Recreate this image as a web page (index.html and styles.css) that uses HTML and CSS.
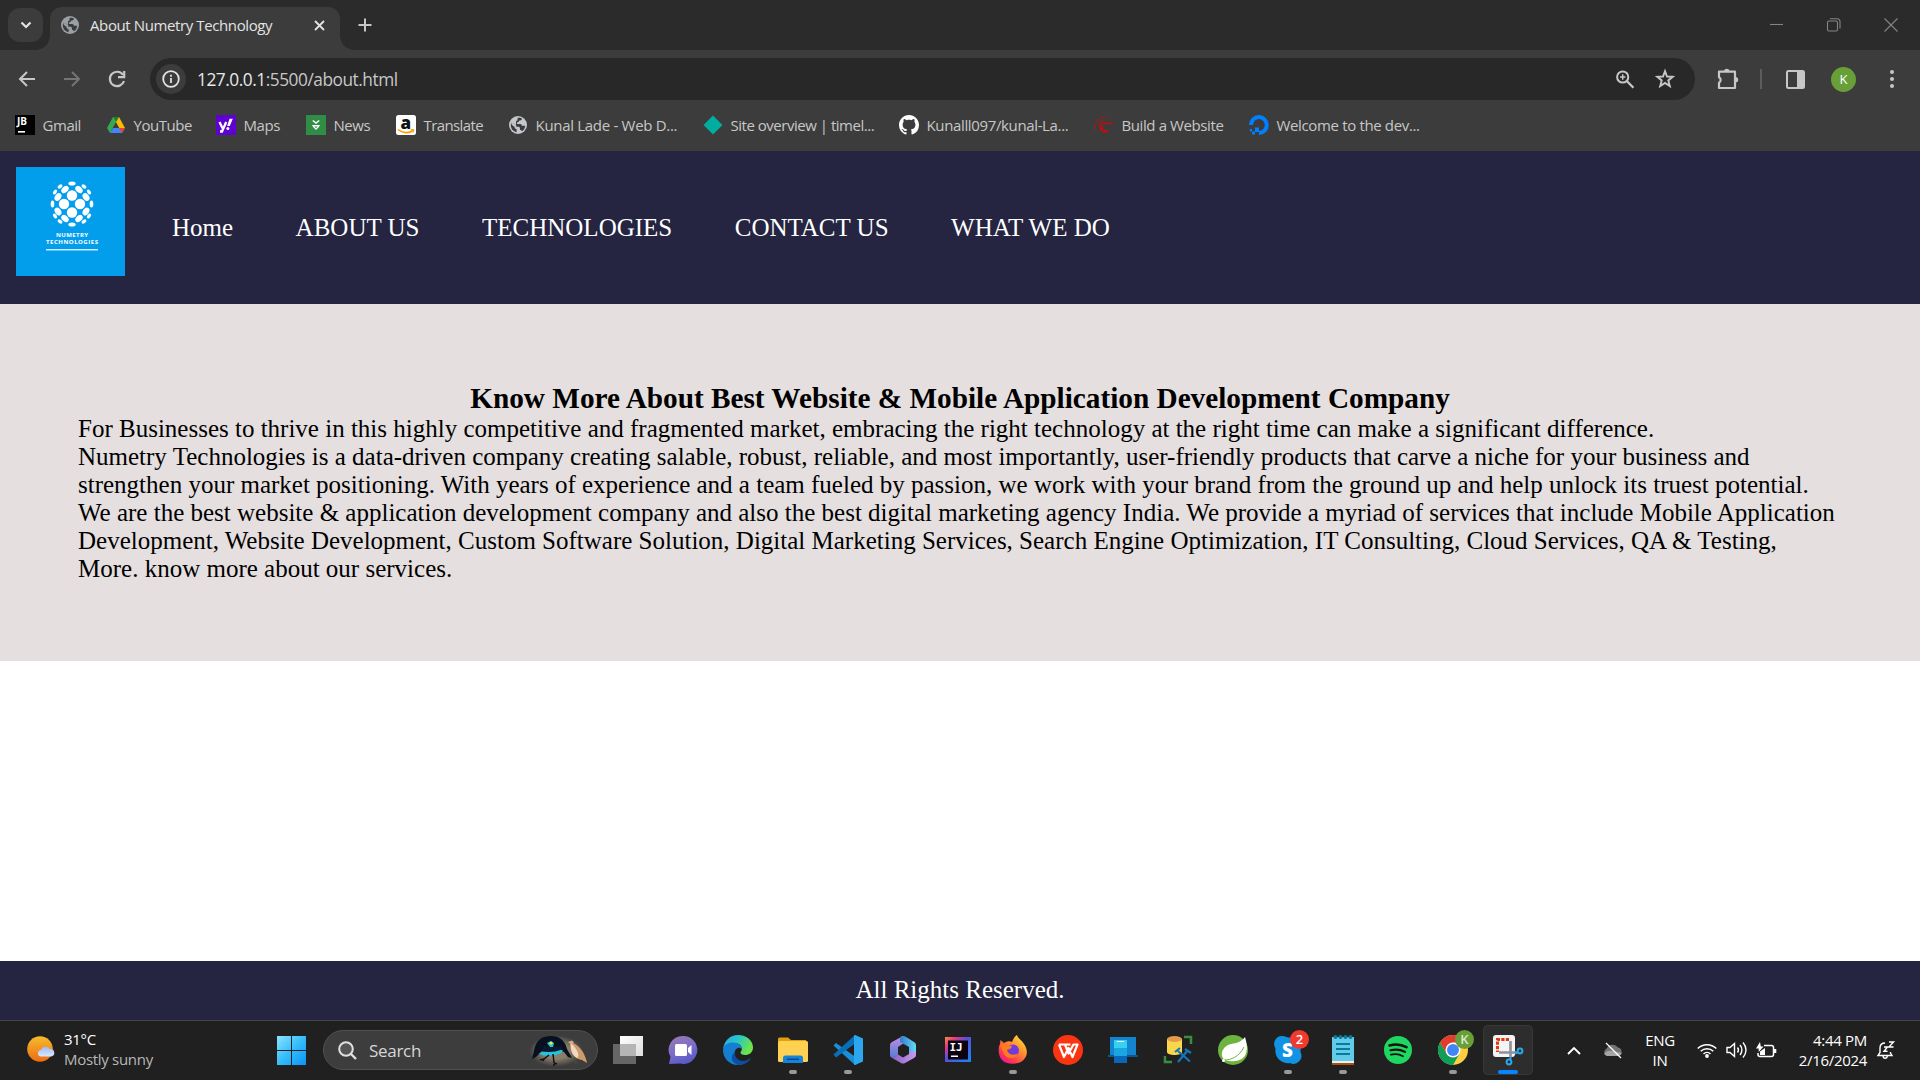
FILE: index.html
```html
<!DOCTYPE html>
<html lang="en">
<head>
<meta charset="utf-8">
<title>About Numetry Technology</title>
<link rel="stylesheet" href="styles.css">
</head>
<body>
<svg class="defs" width="0" height="0" aria-hidden="true">
  <defs>
    <symbol id="globe" viewBox="0 0 18 18"><circle cx="9" cy="9" r="9"/><path class="cut" d="M8.6 1.8C11 1.6 12 2 13 2.7 12.600 4.200 11.500 4.600 10 4.700 9.800 6 9.400 6.300 8 6.400V8h3.300c1 0 1.500.8 1.500 1.700h3.400c-.1 2.200-1.200 4.300-3.200 5.500-.4-.8-.9-1.200-2-1.200v-1.600c0-1.200-.8-1.700-1.700-1.700H7.200V9.100L2 6.500C2.500 8.500 3.500 10 5.400 10.400c.1 1.600.9 2.500 2.200 2.600v3.200C4 15.600 1.800 12.600 1.800 9c0-1 .2-1.800.5-2.600L7 8.800V6.300c0-1.100.5-1.700 1.500-1.700z"/></symbol>
  </defs>
</svg>

<header class="browser">
  <div class="tabstrip">
    <button class="tab-search"><svg width="12" height="8" viewBox="0 0 12 8"><path d="M1.500 1.500 6 6l4.500-4.500" fill="none" stroke="#e3e3e3" stroke-width="2.200"/></svg></button>
    <div class="tab">
      <svg class="globe dim" width="18" height="18"><use href="#globe"/></svg>
      <span class="tab-title">About Numetry Technology</span>
      <svg width="11" height="11" viewBox="0 0 11 11"><path d="M1 1l9 9M10 1l-9 9" stroke="#e3e3e3" stroke-width="1.800"/></svg>
    </div>
    <svg class="newtab" width="14" height="14" viewBox="0 0 14 14"><path d="M7 .5v13M.5 7h13" stroke="#c7c7c7" stroke-width="2"/></svg>
    <div class="window-controls">
      <svg width="14" height="14" viewBox="0 0 14 14"><path d="M0 6.500h13"/></svg>
      <svg width="14" height="14" viewBox="0 0 14 14"><rect x=".5" y="3" width="10" height="10" rx="1.500"/><path d="M3 .8h7.500a2.500 2.500 0 0 1 2.500 2.500v7.200"/></svg>
      <svg width="14" height="14" viewBox="0 0 14 14"><path d="M.5.5l13 13M13.500.5l-13 13"/></svg>
    </div>
  </div>

  <div class="toolbar">
    <div class="nav-buttons">
      <svg width="18" height="18" viewBox="0 0 18 18"><path d="M17 9H3M9 2 2 9l7 7" fill="none" stroke="#c7c7c7" stroke-width="2"/></svg>
      <svg width="18" height="18" viewBox="0 0 18 18"><path d="M1 9h14M9 2l7 7-7 7" fill="none" stroke="#757575" stroke-width="2"/></svg>
      <svg width="18" height="18" viewBox="0 0 18 18"><path d="M15 4.800A7.200 7.200 0 1 0 16 11" fill="none" stroke="#c7c7c7" stroke-width="2.200"/><path d="M16.200 1v6.200H10" fill="none" stroke="#c7c7c7" stroke-width="2.200"/></svg>
    </div>
    <div class="omnibox">
      <span class="site-info"><svg width="18" height="18" viewBox="0 0 18 18"><circle cx="9" cy="9" r="7.800" fill="none" stroke="#e3e3e3" stroke-width="1.800"/><path d="M8.100 8h1.800v5H8.100zM8.100 4.800h1.800v1.900H8.100z" fill="#e3e3e3"/></svg></span>
      <span class="url"><b>127.0.0.1</b>:5500/about.html</span>
      <svg class="zoom-icon" width="18" height="19" viewBox="0 0 18 19"><circle cx="6.700" cy="7" r="5.600" fill="none" stroke="#c7c7c7" stroke-width="2"/><path d="M11 11.300l6.400 6.500" stroke="#c7c7c7" stroke-width="2.300"/><path d="M6.700 4.300v5.400M4 7h5.400" stroke="#c7c7c7" stroke-width="1.500"/></svg>
      <svg width="20" height="20" viewBox="0 0 20 20"><path d="M10 2.200l2 5.300 5.700.3-4.400 3.600 1.500 5.600L10 13.900 5.200 17l1.500-5.600L2.300 7.800 8 7.500z" fill="none" stroke="#c7c7c7" stroke-width="1.900"/></svg>
    </div>
    <svg class="puzzle" width="22" height="22" viewBox="0 0 22 22"><path d="M2 3.600h16V20H2v-5.300a3.100 3.100 0 0 0 0-5.500z" fill="none" stroke="#c7c7c7" stroke-width="2.200" stroke-linejoin="round"/><path d="M7 3a2.800 2.800 0 0 1 5.500 0zM18.500 9a2.700 2.700 0 0 1 0 5.400z" fill="#c7c7c7"/></svg>
    <span class="divider"></span>
    <svg class="panel" width="19" height="19" viewBox="0 0 19 19"><rect x="1" y="1" width="17" height="17" rx="1.500" fill="none" stroke="#c7c7c7" stroke-width="2"/><path d="M11 1h7v17h-7z" fill="#c7c7c7"/></svg>
    <span class="avatar">K</span>
    <svg class="dots" width="4" height="18" viewBox="0 0 4 18"><circle cx="2" cy="2" r="2"/><circle cx="2" cy="9" r="2"/><circle cx="2" cy="16" r="2"/></svg>
  </div>

  <nav class="bookmarks">
    <a class="bm w-gmail"><svg width="20" height="20" viewBox="0 0 20 20"><path d="M0 0h20v20H0z"/><path d="M3 16h7v1.600H3z" fill="#fff"/><text x="2" y="9.700" class="jb">JB</text></svg>Gmail</a>
    <a class="bm w-youtube"><svg width="20" height="20" viewBox="0 0 20 20"><path d="M7 2h6l-3 5.300L4 18l-3-5z" fill="#34a853"/><path d="M13 2l6 11h-6L7 2z" fill="#fbbc04"/><path d="M7 2h6l-3 5.200z" fill="#188038"/><path d="M7 13h12l-3 5H4z" fill="#4285f4"/><path d="M13 13h6l-3 5z" fill="#ea4335"/><path d="M10 7.400 13.200 13H6.800z" fill="#3c3c3c"/></svg>YouTube</a>
    <a class="bm w-maps"><svg width="20" height="20" viewBox="0 0 20 20"><path d="M0 0h20v20H0z" fill="#5f01d1"/><path d="M3.500 7l3 6.300M10.200 7 6 16.500H4" fill="none" stroke="#fff" stroke-width="2.300"/><path d="M13.500 3.800h3.300L13.800 11h-2.600z" fill="#fff"/><circle cx="11.900" cy="13.400" r="1.500" fill="#fff"/></svg>Maps</a>
    <a class="bm w-news"><svg width="20" height="20" viewBox="0 0 20 20"><path d="M0 0h20v20H0z" fill="#2f8d46"/><path d="M6.800 5.500 10 8l3.200-2.500M6.800 10c.2 1.500 1.400 2.500 3.200 4 1.800-1.500 3-2.500 3.200-4M6.800 10.800h6.400" fill="none" stroke="#fff" stroke-width="1.500"/></svg>News</a>
    <a class="bm w-translate"><svg width="20" height="20" viewBox="0 0 20 20"><rect width="20" height="20" rx="2.500" fill="#fff"/><text x="4.600" y="13.500" class="amz">a</text><path d="M2 14.500c4.500 4 11 4 15 1" fill="none" stroke="#f90" stroke-width="1.600"/><path d="M14.500 14.600h3.300l-.8 3" fill="none" stroke="#f90" stroke-width="1"/></svg>Translate</a>
    <a class="bm w-kunal"><svg class="globe" width="20" height="20" viewBox="-1 -1 20 20"><use href="#globe" width="18" height="18"/></svg>Kunal Lade - Web D...</a>
    <a class="bm w-site"><svg width="20" height="20" viewBox="0 0 20 20"><path d="M10 .5 19.500 10 10 19.500.5 10z" fill="#00ad9f"/></svg>Site overview | timel...</a>
    <a class="bm w-github"><svg width="20" height="20" viewBox="0 0 16 16"><path fill="#fff" d="M8 0C3.580 0 0 3.580 0 8c0 3.540 2.290 6.530 5.470 7.590.4.070.55-.17.55-.38 0-.19-.01-.82-.01-1.490-2.010.37-2.530-.49-2.690-.94-.09-.23-.48-.94-.82-1.130-.28-.15-.68-.52-.01-.53.63-.01 1.080.58 1.230.82.72 1.210 1.870.87 2.330.66.070-.52.28-.87.51-1.070-1.780-.2-3.640-.89-3.640-3.950 0-.87.31-1.590.82-2.150-.08-.2-.36-1.020.08-2.120 0 0 .67-.21 2.200.82.64-.18 1.320-.27 2-.27s1.360.09 2 .27c1.530-1.040 2.200-.82 2.200-.82.44 1.100.16 1.920.08 2.120.51.56.82 1.270.82 2.150 0 3.070-1.870 3.750-3.650 3.950.29.25.54.73.54 1.480 0 1.070-.01 1.930-.01 2.200 0 .21.15.46.55.38A8.010 8.010 0 0 0 16 8c0-4.420-3.580-8-8-8z"/></svg>Kunalll097/kunal-La...</a>
    <a class="bm w-build"><svg width="20" height="20" viewBox="0 0 20 20"><g fill="none" stroke="#c90b0b"><path d="M1.500 15C0 10 2 6 6 4.500M6 3c2-1.200 4-1.200 6.500-.5M5 12c0-3 1-5 4-6.500" stroke-width=".9"/><path d="M19 7c-3 2.500-5 2.500-9 1M10 7c-3 2-3 5-1 7" stroke-width="1.500"/><path d="M6.500 12c1 4.500 4 5.500 7 3.500" stroke-width="2.200"/></g></svg>Build a Website</a>
    <a class="bm w-welcome"><svg width="20" height="20" viewBox="0 0 20 20"><path d="M10 17.900A7.900 7.900 0 1 0 2 10" fill="none" stroke="#0080ff" stroke-width="4"/><path d="M6 12.500h4V17H6zM3 16.500h3v3H3zM.8 14h2.200v2.500H.8z" fill="#0080ff"/></svg>Welcome to the dev...</a>
  </nav>
</header>

<main class="page">
  <div class="site-header">
    <svg class="logo" width="109" height="109" viewBox="0 0 109 109">
      <path d="M0 0h109v109H0z" fill="#029eec"/>
      <g fill="#fff">
        <circle cx="56" cy="28.500" r="5.200"/><circle cx="48" cy="37" r="5.200"/><circle cx="64" cy="37" r="5.200"/><circle cx="56" cy="45.500" r="5.200"/>
        <ellipse cx="56" cy="16.500" rx="3.600" ry="2"/><ellipse cx="56" cy="57.500" rx="3.600" ry="2"/><ellipse cx="36.500" cy="37" rx="1.800" ry="3.600"/><ellipse cx="75.500" cy="37" rx="1.800" ry="3.600"/>
        <ellipse cx="49" cy="22.500" rx="4.200" ry="3" transform="rotate(-45 49 22.500)"/><ellipse cx="63" cy="22.500" rx="4.200" ry="3" transform="rotate(45 63 22.500)"/>
        <ellipse cx="42" cy="30" rx="4.200" ry="3" transform="rotate(-55 42 30)"/><ellipse cx="70" cy="30" rx="4.200" ry="3" transform="rotate(55 70 30)"/>
        <ellipse cx="42" cy="44.500" rx="4.200" ry="3" transform="rotate(55 42 44.500)"/><ellipse cx="70" cy="44.500" rx="4.200" ry="3" transform="rotate(-55 70 44.500)"/>
        <ellipse cx="49" cy="51.500" rx="4.200" ry="3" transform="rotate(45 49 51.500)"/><ellipse cx="63" cy="51.500" rx="4.200" ry="3" transform="rotate(-45 63 51.500)"/>
        <ellipse cx="44" cy="19.500" rx="2.700" ry="1.700" transform="rotate(-35 44 19.500)"/><ellipse cx="68" cy="19.500" rx="2.700" ry="1.700" transform="rotate(35 68 19.500)"/>
        <ellipse cx="39" cy="25" rx="2.700" ry="1.700" transform="rotate(-55 39 25)"/><ellipse cx="73" cy="25" rx="2.700" ry="1.700" transform="rotate(55 73 25)"/>
        <ellipse cx="39" cy="49" rx="2.700" ry="1.700" transform="rotate(55 39 49)"/><ellipse cx="73" cy="49" rx="2.700" ry="1.700" transform="rotate(-55 73 49)"/>
        <ellipse cx="44" cy="54.500" rx="2.700" ry="1.700" transform="rotate(35 44 54.500)"/><ellipse cx="68" cy="54.500" rx="2.700" ry="1.700" transform="rotate(-35 68 54.500)"/>
        <text x="40" y="69.500" textLength="32" class="logo-text">NUMETRY</text>
        <text x="30" y="76.800" textLength="52" class="logo-text">TECHNOLOGIES</text>
        <path d="M30 82h52v1.500H30z" opacity=".8"/>
      </g>
    </svg>
    <nav class="menu"><a>Home</a><a>ABOUT US</a><a>TECHNOLOGIES</a><a>CONTACT US</a><a>WHAT WE DO</a></nav>
  </div>
  <section class="about">
    <h2>Know More About Best Website &amp; Mobile Application Development Company</h2>
    <p>For Businesses to thrive in this highly competitive and fragmented market, embracing the right technology at the right time can make a significant difference.<br>Numetry Technologies is a data-driven company creating salable, robust, reliable, and most importantly, user-friendly products that carve a niche for your business and<br>strengthen your market positioning. With years of experience and a team fueled by passion, we work with your brand from the ground up and help unlock its truest potential.<br>We are the best website &amp; application development company and also the best digital marketing agency India. We provide a myriad of services that include Mobile Application<br>Development, Website Development, Custom Software Solution, Digital Marketing Services, Search Engine Optimization, IT Consulting, Cloud Services, QA &amp; Testing,<br>More. know more about our services.</p>
  </section>
  <footer class="site-footer">All Rights Reserved.</footer>
</main>

<div class="taskbar">
  <div class="weather">
    <svg width="28" height="28" viewBox="0 0 28 28"><defs><linearGradient id="sun" x2="0" y2="1"><stop stop-color="#f6bd2c"/><stop offset="1" stop-color="#ee6a14"/></linearGradient><linearGradient id="cl" x2="0" y2="1"><stop stop-color="#9dbcf4"/><stop offset="1" stop-color="#dbe7fc"/></linearGradient></defs><circle cx="13" cy="13" r="12.800" fill="url(#sun)"/><path d="M13.500 20.500a3.300 3.300 0 0 1 .3-6.500 5 5 0 0 1 9-.8 3.700 3.700 0 0 1 1.500 7.300z" fill="url(#cl)"/></svg>
    <div class="weather-text"><span>31°C</span><span class="muted">Mostly sunny</span></div>
  </div>
  <svg class="start" width="29" height="29" viewBox="0 0 29 29"><defs><linearGradient id="win" gradientUnits="userSpaceOnUse" x1="0" y1="0" x2="29" y2="29"><stop stop-color="#8ce4ff"/><stop offset=".5" stop-color="#35bdfb"/><stop offset="1" stop-color="#0a93f7"/></linearGradient></defs><path d="M0 0h14v14H0zM15 0h14v14H15zM0 15h14v14H0zM15 15h14v14H15z" fill="url(#win)"/></svg>
  <div class="search">
    <svg width="19" height="19" viewBox="0 0 19 19"><circle cx="8" cy="8" r="6.800" fill="#555" stroke="#e0e0e0" stroke-width="2"/><path d="M13 13l5 5" stroke="#e0e0e0" stroke-width="2.400"/></svg>
    <span>Search</span>
    <svg class="birds" width="60" height="34" viewBox="0 0 60 34"><defs><radialGradient id="glow"><stop offset=".5" stop-color="#8a7e68"/><stop offset="1" stop-color="#8a7e68" stop-opacity="0"/></radialGradient></defs><ellipse cx="26" cy="18" rx="27" ry="15.500" fill="url(#glow)"/><path d="M4 18C6 6 13 3 21 3c8 0 14 4 16 13l5 9-4-1-4-5-6-2-7 2-9-1-6 6-4 2z" fill="#071020"/><path d="M9 20.500c6-4 17-5 24-3-2 3.500-6 4.500-9 4.500-6 1-11 1-15-1.500z" fill="#21c5e2"/><path d="M12 18.500c6 1 14 .5 20-2l1-3H14z" fill="#0b1830"/><path d="M19 22l-5 4M23 21l1 9m0 1v2m0-3 3 1m-13-5-4 1m4-1-1 2" stroke="#101018" stroke-width="1.500"/><path d="M17 10l4-2 3 2-1 4h-3z" fill="#22c5d8"/><path d="m19 10 2-1.500 2 1.500-2 2z" fill="#ffe236"/><path d="M40 9l3 1c8 4 11 10 13 16l1 4-5-3c-6-1-10-5-11-10-1-3-1-5-1-8z" fill="#cf9b6c"/><path d="M41 10c-1 8 2 13 6 15 3-2 1-8-6-15z" fill="#f0d9be"/><path d="M38 9l4-1.500 2 2-3 2z" fill="#cfae8c"/><path d="M47 26l-2 3m3 0-4 1" stroke="#5b4838" stroke-width=".8"/></svg>
  </div>
  <div class="apps">
    <span class="app"><svg width="30" height="30" viewBox="0 0 30 30"><defs><linearGradient id="tv" x2="1" y2="1"><stop stop-color="#fff"/><stop offset="1" stop-color="#ddd"/></linearGradient></defs><path d="M7 1h23v20H7z" fill="url(#tv)"/><path d="M0 9h23v20H0z" fill="#666"/><path d="M7 9h16v12H7z" fill="#b5b5b5"/></svg></span>
    <span class="app"><svg width="30" height="30" viewBox="0 0 30 30"><defs><linearGradient id="chat" x1=".3" x2=".7" y2="1"><stop stop-color="#9678b4"/><stop offset=".5" stop-color="#7b6ccb"/><stop offset="1" stop-color="#5457c4"/></linearGradient></defs><path d="M15 1a14 14 0 1 1-3 27.600L1 29l1.500-7A14 14 0 0 1 15 1z" fill="url(#chat)"/><rect x="7" y="9" width="12" height="12" rx="1.500" fill="#fff"/><path d="M20 13l3.500-3v10L20 17z" fill="#fff"/></svg></span>
    <span class="app"><svg width="30" height="30" viewBox="0 0 30 30"><defs><linearGradient id="e1" x2="1" y2=".4"><stop stop-color="#27a9e8"/><stop offset=".5" stop-color="#2ac5c8"/><stop offset="1" stop-color="#6de548"/></linearGradient></defs><path d="M15 0c9 0 15 6 15 12.500 0 5-4 7.500-8 7.500-3 0-4.500-1-4.500-2.200 0-1.100 1.300-1.800 1.300-3.800C18.800 10 15 8 11 8 5 8 1 11.500.2 14 1 6 7 0 15 0z" fill="url(#e1)"/><path d="M0 15c0-5 5-7.500 10-7.500 5.500 0 9 3 8.800 6.500-2.800-3-7.300-.5-7.300 4.500C11.500 25 18 28.500 24 26c-3 3-6 4-9 4C6 30 0 23 0 15z" fill="#147fd0"/><path d="M12 17c-1 5 3 9 8 9 3 0 5-1 7.500-3 .5.500.2 1-.3 1.600-2.500 3.400-6.500 5.400-11.700 5.400C9 29 6 21 12 17z" fill="#0c4ea1"/></svg></span>
    <span class="app run"><svg width="32" height="30" viewBox="0 0 32 30"><path d="M1 4a1.500 1.500 0 0 1 1.500-1.500H11L14 5h15v6H1z" fill="#e1a00c"/><rect x="1" y="6" width="30" height="21" rx="1.500" fill="#ffd152"/><path d="M6 28v-5a2.500 2.500 0 0 1 2.500-2.500h15A2.500 2.500 0 0 1 26 23v5z" fill="#1583d8"/><path d="M10 23.500h12v1.500H10z" fill="#0a4a8a"/></svg></span>
    <span class="app run"><svg width="30" height="30" viewBox="0 0 30 30"><path d="M.5 10.500 3 8 24 23v6L22 30z" fill="#1a8fd8"/><path d="M.5 19.500 3 22.500 24 7V1L22 0z" fill="#0870b8"/><path d="M22 0l8 3.500v23L22 30c-.8-.3-1-1-1-1V1c0-.6.400-.8 1-1z" fill="#2ba7f0"/></svg></span>
    <span class="app"><svg width="30" height="30" viewBox="0 0 30 30"><defs><linearGradient id="m1" x2="0" y2="1"><stop stop-color="#c58ee8"/><stop offset="1" stop-color="#547bd4"/></linearGradient><linearGradient id="m2"><stop stop-color="#3579cf"/><stop offset="1" stop-color="#65dbf5"/></linearGradient><linearGradient id="m3"><stop stop-color="#8a5fc0"/><stop offset="1" stop-color="#c99bf0"/></linearGradient></defs><path d="M15 1 4 7Q2 8 2 10v10q0 2 2 3l6-3V12l6-4V2z" fill="url(#m1)"/><path d="M12 2q3-2 6 0l8 5q2 1 2 3v10l-7-3v-5l-9-5z" fill="url(#m2)"/><path d="M28 17v3q0 2-2 3l-9 5q-2 1-4 0l-9-5 6-3.500 5 3 6-3.500v-2.500z" fill="url(#m3)"/></svg></span>
    <span class="app"><svg width="30" height="30" viewBox="0 0 30 30"><defs><linearGradient id="ij" x2="1" y2="1"><stop stop-color="#f5943a"/><stop offset=".2" stop-color="#ef3a7a"/><stop offset=".45" stop-color="#594fd7"/><stop offset="1" stop-color="#1689f8"/></linearGradient></defs><path d="M2 2h26v25H2z" fill="url(#ij)"/><path d="M5 5.500h20v19H5z" fill="#0c0310"/><path d="M8 20.500h7V22H8z" fill="#fff"/><text x="6.500" y="15.500" class="ij-text">IJ</text></svg></span>
    <span class="app run"><svg width="30" height="30" viewBox="0 0 30 30"><defs><linearGradient id="ff" x1="1" x2=".2" y2="1"><stop stop-color="#fff44f"/><stop offset=".4" stop-color="#ff9a2b"/><stop offset=".8" stop-color="#ff3750"/><stop offset="1" stop-color="#e8159b"/></linearGradient></defs><path d="M19 0c1 4 5 5 7 9 4 6 4 12-1 16.500S8 30 3.500 24.500C0 20 0 12 2 9l.5-4L6 8c3-2 6-2 8-1 1-3 3-6 5-7z" fill="url(#ff)"/><circle cx="15" cy="15.500" r="6" fill="#6e3bdc"/><path d="M2 10c4-3 7 1 12 1-1 4-4 3-5 4 1 5 8 6 11 3-2 6-11 7-14 1z" fill="#ff7b1c"/></svg></span>
    <span class="app"><svg width="30" height="30" viewBox="0 0 30 30"><circle cx="15" cy="15" r="15" fill="#fb3412"/><path d="M6 9.500h11.500M6 9.500l5 12.500 4.500-9 4 9 5-12.500h-4l-5 9-3.500-9" fill="none" stroke="#fff" stroke-width="2.200" stroke-linejoin="round"/></svg></span>
    <span class="app"><svg width="30" height="30" viewBox="0 0 30 30"><path d="M2 2h26v19H2z" fill="#1384d0"/><path d="M0 20h30v2H0z" fill="#0b5793"/><path d="M6 5h13v8H6z" fill="#37d0f0"/><path d="M6 13h13v8H6z" fill="#1ba5e2"/><path d="M6 21h13v7H6z" fill="#0867b8"/><path d="M9 6.500h7" stroke="#fff"/></svg></span>
    <span class="app"><svg width="30" height="30" viewBox="0 0 30 30"><path d="M4 4v13c0 4 15 4 15 0V4z" fill="#f8d84a"/><ellipse cx="11.500" cy="4" rx="7.500" ry="3" fill="#e69a4c"/><path d="M21 2h7v7M2 21v6h7" fill="none" stroke="#388e3c" stroke-width="2.500"/><path d="M15 16l12 10.500M25 15 15 27M12 17l5-4M22 14l6 4" stroke="#1475be" stroke-width="2.200"/></svg></span>
    <span class="app"><svg width="30" height="30" viewBox="0 0 30 30"><circle cx="15" cy="15" r="15" fill="#6db33f"/><path d="M27 2c4 13 2 23-10 24-4 .5-8 0-10-1-6-4-3-14 6-16 6-1 10-2 14-7z" fill="#fff"/><path d="M6 25c7 0 15-3 20-13" fill="none" stroke="#6db33f" stroke-width="1"/><circle cx="5.500" cy="25.500" r="1.500" fill="#fff"/></svg></span>
    <span class="app run"><svg width="30" height="30" viewBox="0 0 30 30"><path d="M9 1a12 12 0 0 1 6 1.500A12.500 12.500 0 0 1 27.500 17 8 8 0 0 1 17 28 12.500 12.500 0 0 1 2.500 13.500 8 8 0 0 1 9 1z" fill="#1093e4"/><text x="9" y="22" class="skype-s">S</text></svg><i class="badge red">2</i></span>
    <span class="app run"><svg width="30" height="30" viewBox="0 0 30 30"><path d="M4 2h22v24H4z" fill="#63cbea"/><path d="M4 26h22v2H4z" fill="#eee"/><path d="M4 28h22v2H4z" fill="#a9510b"/><g fill="#087a9c"><circle cx="7.500" cy="2" r="2"/><circle cx="12.500" cy="2" r="2"/><circle cx="17.500" cy="2" r="2"/><circle cx="22.500" cy="2" r="2"/><path d="M8 8h14v2H8zM8 13h14v2H8zM8 18h14v2H8z"/></g></svg></span>
    <span class="app"><svg width="30" height="30" viewBox="0 0 30 30"><circle cx="15" cy="15" r="14" fill="#1ed760"/><g fill="none" stroke="#121212" stroke-linecap="round"><path d="M6.500 10.500c6-1.800 12-1 17 1.700" stroke-width="2.600"/><path d="M7.500 15.300c5-1.400 10-.8 14.500 1.600" stroke-width="2.200"/><path d="M8 19.700c4.500-1 8.500-.5 12 1.500" stroke-width="1.800"/></g></svg></span>
    <span class="app run"><svg width="30" height="30" viewBox="0 0 30 30"><circle cx="15" cy="15" r="15" fill="#ffcd40"/><path d="M15 15 8.500 19 2 7.500A15 15 0 0 1 28 7.500H15z" fill="#e33b2e"/><path d="M2 7.500 8.500 18.800C11 22 16 23 21.500 18.700L15 30A15 15 0 0 1 2 7.500z" fill="#109d58"/><circle cx="15" cy="15" r="7.500" fill="#fff"/><circle cx="15" cy="15" r="6" fill="#4285f4"/></svg><i class="badge green">K</i></span>
    <span class="app active"><svg width="30" height="30" viewBox="0 0 30 30"><rect x="0" y="0" width="22" height="22" rx="3" fill="#f4f4f4"/><path d="M16 4.500H4.500V17" fill="none" stroke="#db3b12" stroke-width="3" stroke-dasharray="3.200 1.300"/><path d="M17.500 6v16M6 17.500h17" stroke="#8b929a" stroke-width="2.600"/><g fill="none" stroke="#28a8ea" stroke-width="2"><circle cx="27" cy="16" r="2.400"/><circle cx="16" cy="27" r="2.400"/><path d="M22 18.500l3-1.500M18 22l-1.500 3"/></g></svg></span>
  </div>
  <div class="tray">
    <svg class="chev" width="14" height="9" viewBox="0 0 14 9"><path d="M1 8l6-6 6 6" fill="none" stroke="#fff" stroke-width="1.900"/></svg>
    <svg class="cloud" width="20" height="17" viewBox="0 0 20 17"><path d="M4 14a4 4 0 0 1-.3-7.500A6.500 6.500 0 0 1 15 5.500 4.500 4.500 0 0 1 16 14z" fill="#757575"/><path d="M1 12c2-3 5-4 8-3l5 1 5 1-3 3H4z" fill="#a5a5a5"/><path d="M3 1l15 15" stroke="#fff" stroke-width="1.300"/></svg>
    <div class="lang"><span>ENG</span><span>IN</span></div>
    <svg class="wifi" width="20" height="16" viewBox="0 0 20 16"><g fill="none" stroke="#fff" stroke-width="1.500"><path d="M.7 6.500a13.200 13.200 0 0 1 18.600 0M3.700 9.300a9 9 0 0 1 12.600 0M6.500 12a5 5 0 0 1 7 0"/></g><circle cx="10" cy="14" r="1.900" fill="#fff"/></svg>
    <svg class="vol" width="21" height="18" viewBox="0 0 21 18"><g fill="none" stroke="#fff" stroke-width="1.400"><path d="M1 6.500h3L8.500 2.500v13L4 11.500H1z"/><path d="M11.500 6.500a4 4 0 0 1 0 5M14 4a7.500 7.500 0 0 1 0 10M17 1.500c4 4.500 4 10.500 0 15"/></g></svg>
    <svg class="batt" width="21" height="17" viewBox="0 0 21 17"><path d="M8 3.500h7.500a2 2 0 0 1 2 2v7a2 2 0 0 1-2 2H4a2 2 0 0 1-2-2V11" fill="none" stroke="#fff" stroke-width="1.500"/><path d="M18 7h2.300v4H18zM4 13V9.500L9 6v7zM4 0 0 6.500h2.700V10L7.500 4.500H4.800z" fill="#fff"/></svg>
    <div class="clock"><span>4:44 PM</span><span>2/16/2024</span></div>
    <svg width="18" height="19" viewBox="0 0 18 19"><path d="M8 2C4.500 2 3 4.500 3 7v4.500L1 14.500h14L13.500 12v-1M6 15c.3 3 4 3 4.300 0" fill="none" stroke="#fff" stroke-width="1.400"/><path d="M12 1h4.500L12 6h4.500M7 6h3.500L7 10.200h3.500" fill="none" stroke="#fff" stroke-width="1.400"/></svg>
  </div>
</div>
</body>
</html>
```
FILE: styles.css
```css
* { box-sizing: border-box; }
body {
  margin: 0;
  width: 1920px;
  height: 1080px;
  overflow: hidden;
  display: flex;
  flex-direction: column;
  background: #fff;
  font-family: "Open Sans", "Noto Sans", sans-serif;
}
svg { display: block; flex: none; overflow: visible; }
.defs { position: absolute; }

/* Browser window */
.browser { height: 151px; flex: none; background: #3c3c3c; color: #c7c7c7; }
.tabstrip {
  height: 50px;
  background: #2b2b2b;
  display: flex;
  align-items: flex-start;
  padding: 7px 16px 0 8px;
}
.tab-search {
  position: relative; z-index: 1;
  width: 35px; height: 34px; margin: 1px 7px 0 0; padding: 0;
  border: 0; border-radius: 12px; background: #3c3c3c;
  display: flex; align-items: center; justify-content: center;
}
.tab {
  position: relative;
  width: 290px; height: 43px;
  border-radius: 12px 12px 0 0;
  background: #3c3c3c;
  display: flex; align-items: center;
  padding: 0 15px 7px 11px;
}
.tab::before, .tab::after {
  content: ""; position: absolute; bottom: 0; width: 14px; height: 14px;
}
.tab::before { left: -14px; background: radial-gradient(circle at 0 0, #2b2b2b 13.5px, #3c3c3c 14px); }
.tab::after { right: -14px; background: radial-gradient(circle at 100% 0, #2b2b2b 13.5px, #3c3c3c 14px); }
.globe { fill: #c4c7cc; }
.globe.dim { fill: #9aa0a6; }
.cut { fill: #3c3c3c; }
.tab-title { margin-left: 11px; width: 225px; font-size: 15px; letter-spacing: -0.39px; color: #e3e3e3; white-space: nowrap; }
.newtab { margin: 11px 0 0 18px; }
.window-controls { margin: 11px 0 0 auto; display: flex; gap: 43px; padding-right: 6px; }
.window-controls svg { fill: none; stroke: #858585; stroke-width: 1.1; }

.toolbar { height: 58px; display: flex; align-items: center; }
.nav-buttons { display: flex; gap: 27px; padding-left: 18px; width: 150px; }
.omnibox {
  width: 1545px; height: 42px; border-radius: 21px; background: #282828;
  display: flex; align-items: center; padding: 0 20px 0 6px;
}
.site-info { width: 30px; height: 30px; border-radius: 50%; background: #3c3c3c; display: flex; align-items: center; justify-content: center; }
.url { margin-left: 11px; font-size: 17.3px; letter-spacing: -0.47px; }
.url b { font-weight: 400; color: #e8e8e8; }
.zoom-icon { margin: 0 21px 0 auto; }
.puzzle { margin-left: 22px; }
.divider { width: 2px; height: 20px; margin-left: 21px; background: #5c5c5c; }
.panel { margin-left: 24px; }
.avatar { width: 25px; height: 25px; margin-left: 26px; border-radius: 50%; background: #689f38; color: #fff; font: 13px/25px "Open Sans", sans-serif; text-align: center; }
.dots { margin-left: 34px; fill: #c7c7c7; }

.bookmarks { height: 36px; display: flex; align-items: center; padding: 0 0 2px 15px; font-size: 15px; letter-spacing: -0.45px; }
.bm { display: flex; align-items: center; gap: 7.5px; white-space: nowrap; }
.w-gmail { width: 91px; }
.w-youtube { width: 110px; }
.w-maps { width: 90px; }
.w-news { width: 90px; }
.w-translate { width: 112px; letter-spacing: -0.6px; }
.w-kunal { width: 195px; letter-spacing: -0.3px; }
.w-site { width: 196px; letter-spacing: -0.48px; }
.w-github { width: 195px; letter-spacing: -0.36px; }
.w-build { width: 155px; letter-spacing: -0.4px; }
.w-welcome { letter-spacing: -0.35px; }
.jb { font: 700 10px "Open Sans", sans-serif; fill: #fff; letter-spacing: 0; }
.amz { font: 800 17px "Open Sans", sans-serif; fill: #111; }

/* Web page */
.page { flex: none; height: 869px; display: flex; flex-direction: column; font: 25px/28px "Liberation Serif", "Times New Roman", serif; }
.site-header { height: 153px; background: #252441; padding: 16px; display: flex; }
.menu { display: flex; gap: 62.5px; padding: 47px 0 0 47px; color: #fff; }
.logo-text { font: 700 6px "Open Sans", sans-serif; }
.about { height: 357px; background: #e5dfdf; padding: 78px; color: #000; }
.about h2 { margin: 0; font-size: 29.25px; line-height: 33px; text-align: center; white-space: nowrap; }
.about p { margin: 0; white-space: nowrap; }
.site-footer { height: 59px; margin-top: auto; background: #252441; color: #fff; text-align: center; padding-top: 15px; }

/* Desktop taskbar */
.taskbar { height: 60px; flex: none; background: #202020; border-top: 1px solid #444; padding-bottom: 1px; display: flex; align-items: center; font-size: 15px; color: #fff; }
.weather { width: 277px; padding-left: 27px; display: flex; align-items: center; gap: 9px; letter-spacing: -0.3px; }
.weather-text, .lang, .clock { display: flex; flex-direction: column; line-height: 20px; white-space: nowrap; }
.weather-text { padding-bottom: 2px; }
.muted { color: #b8b8b8; }
.search { width: 275px; height: 40px; margin-left: 17px; border: 1px solid #505050; border-radius: 20px; background: #3d3d3d; display: flex; align-items: center; padding: 0 7px 0 14px; color: #d6d6d6; font-size: 17px; letter-spacing: -0.3px; }
.search span { margin-left: 12px; }
.birds { margin-left: auto; }
.apps { display: flex; margin-left: 2px; }
.app { position: relative; width: 55px; height: 50px; display: flex; align-items: center; justify-content: center; }
.run::after, .active::after { content: ""; position: absolute; bottom: 1px; left: 24px; width: 8px; height: 4px; border-radius: 2px; background: #999; }
.active { width: 50px; margin-left: 3px; border-radius: 5px; background: #2d2d2d; box-shadow: inset 0 0 0 1px #383838; padding-right: 0; }
.active::after { left: 15px; width: 20px; background: #0a84ff; }
.badge { position: absolute; left: 30px; top: 5px; width: 19px; height: 19px; border-radius: 50%; font: 600 13px/19px "Open Sans", sans-serif; text-align: center; }
.red { background: #f03a2e; color: #fff; }
.green { background: #689f38; color: #dce8cf; }
.ij-text { font: 700 11px "DejaVu Sans Mono", monospace; fill: #fff; }
.skype-s { font: 800 19px "Open Sans", sans-serif; fill: #fff; }
.tray { margin-left: auto; padding-right: 25px; display: flex; align-items: center; letter-spacing: -0.3px; }
.cloud { margin-left: 22px; }
.lang { width: 34px; margin-left: 20px; align-items: center; }
.wifi { margin-left: 20px; }
.vol { margin-left: 9px; }
.batt { margin-left: 9px; }
.clock { width: 75px; margin: 0 10px 0 15px; align-items: flex-end; }
```
